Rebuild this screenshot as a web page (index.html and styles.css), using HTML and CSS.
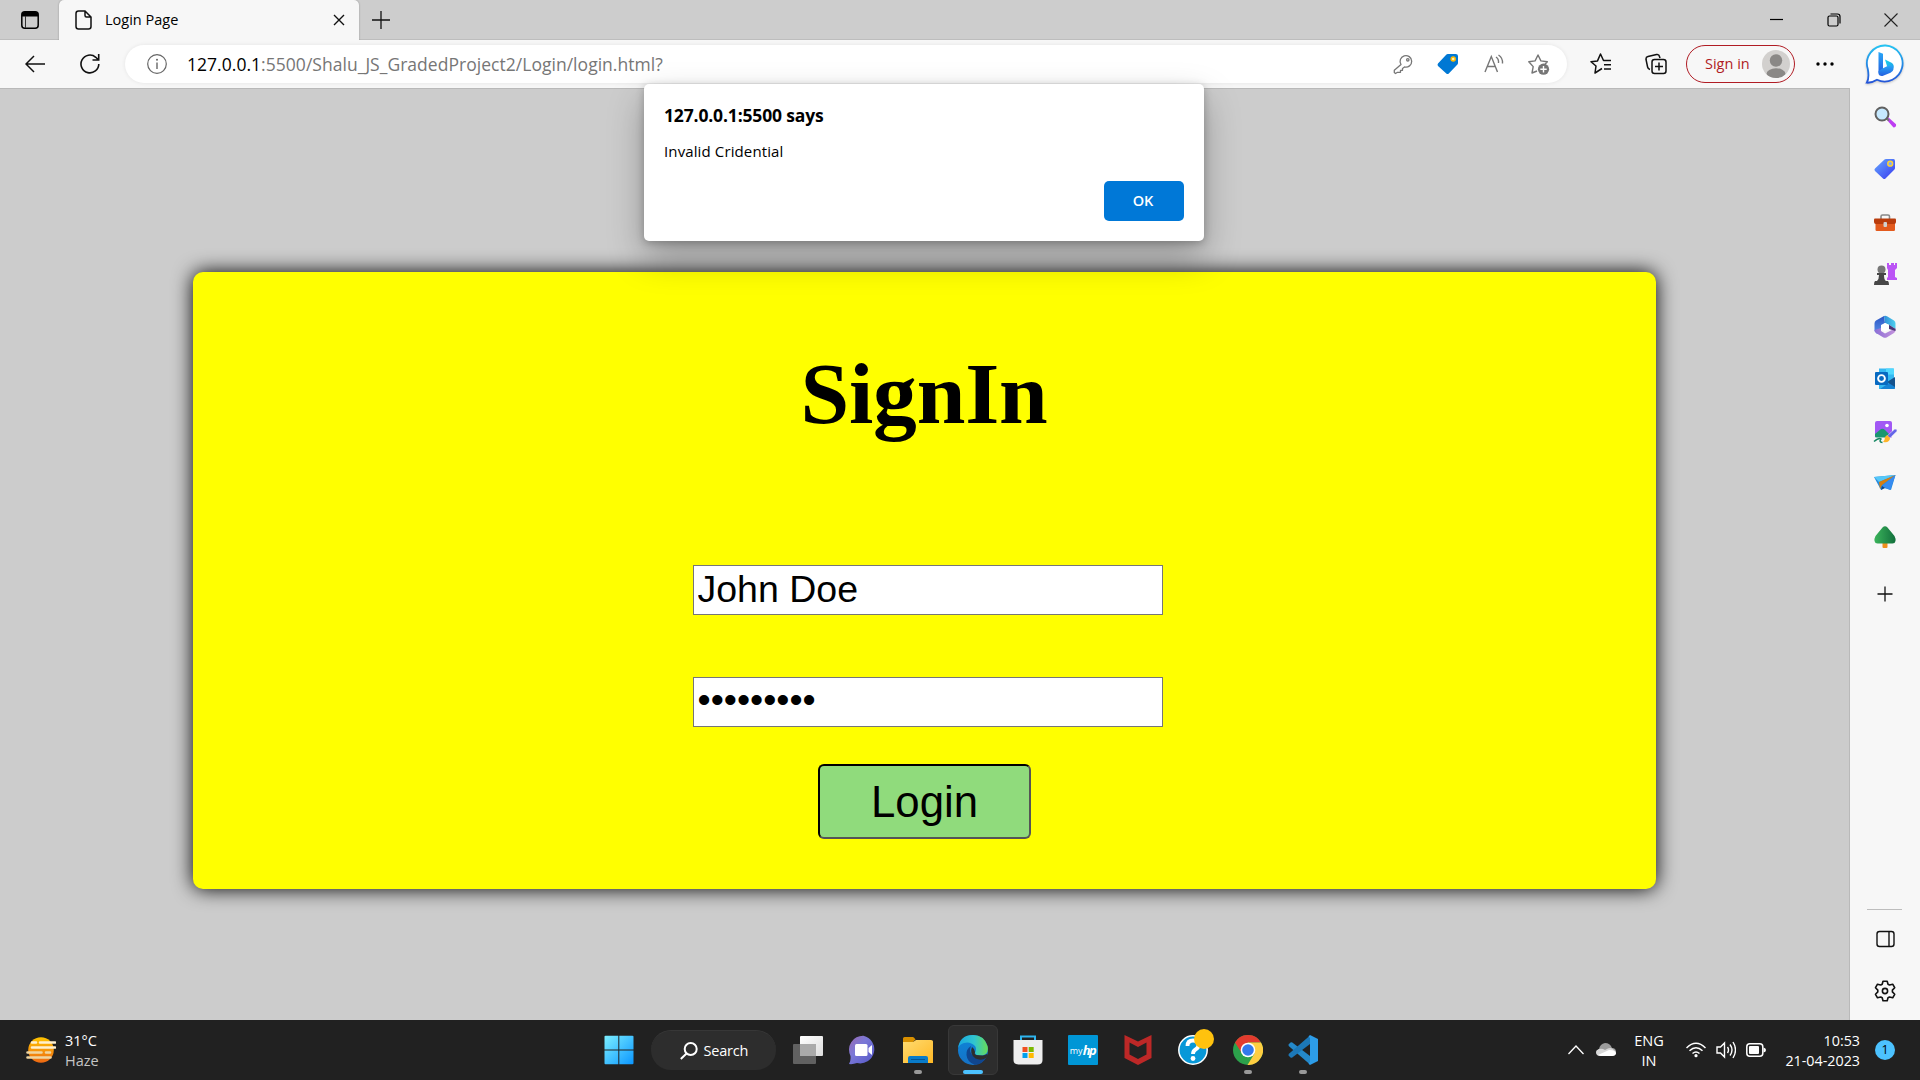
FILE: index.html
```html
<!DOCTYPE html>
<html lang="en">
<head>
<meta charset="utf-8">
<title>Login Page</title>
<link rel="stylesheet" href="styles.css">
</head>
<body>
<div class="browser">
  <header class="tabstrip">
    <div class="tab-menu"><svg width="18" height="18" viewBox="0 0 18 18"><rect x=".8" y=".8" width="16.400" height="16.400" rx="3" fill="none" stroke="#000" stroke-width="1.500"/><path d="M1 5.500V3.500Q1 1 3.500 1h11Q17 1 17 3.500v2z"/><path d="M4.500 5v12" stroke="#333"/></svg></div>
    <div class="tab">
      <svg class="tab-page" width="17" height="20" viewBox="0 0 17 20" fill="none" stroke="#111" stroke-width="1.500"><path d="M3.500 1H10l6 6v9.500Q16 19 13.500 19h-10Q1 19 1 16.500v-13Q1 1 3.500 1zM10 1v4.500Q10 7 11.500 7H16"/></svg>
      <span class="tab-title">Login Page</span>
      <svg class="tab-close" width="12" height="12" viewBox="0 0 12 12" stroke="#111" stroke-width="1.400"><path d="M1 1l10 10M11 1L1 11"/></svg>
    </div>
    <svg class="tab-new" width="18" height="18" viewBox="0 0 18 18" stroke="#111" stroke-width="1.300"><path d="M9 0v18M0 9h18"/></svg>
    <div class="window-buttons">
      <svg width="14" height="14" viewBox="0 0 14 14" stroke="#000"><path d="M0 6.500h13" stroke-width="1.200"/></svg>
      <svg width="14" height="14" viewBox="0 0 14 14" fill="none" stroke="#000" stroke-width="1.200"><rect x="1" y="3" width="10" height="10" rx="1.500"/><path d="M3.500 1H10.500Q13 1 13 3.500V10.500"/></svg>
      <svg width="14" height="14" viewBox="0 0 14 14" stroke="#222" stroke-width="1.100"><path d="M.5.5l13 13M13.500.5l-13 13"/></svg>
    </div>
  </header>

  <nav class="toolbar">
    <svg class="back" width="20" height="18" viewBox="0 0 20 18" fill="none" stroke="#111" stroke-width="1.500"><path d="M9 1L1 9l8 8M1 9h19"/></svg>
    <svg class="reload" width="20" height="20" viewBox="0 0 20 20" fill="none" stroke="#111" stroke-width="1.600"><path d="M18.800 10A8.900 8.900 0 1 1 15.800 3.300L18.500 6M18.700 0v6H12.500"/></svg>
    <div class="address">
      <svg class="info" width="20" height="20" viewBox="0 0 20 20" fill="none" stroke="#666"><circle cx="10" cy="10" r="9.300" stroke-width="1.200"/><path d="M10 8.500V15" stroke-width="1.400"/><circle cx="10" cy="5.800" r="1" fill="#666" stroke="none"/></svg>
      <span class="url"><b>127.0.0.1</b>:5500/Shalu_JS_GradedProject2/Login/login.html?</span>
      <div class="address-tools">
        <svg width="22" height="22" viewBox="0 0 22 22" fill="none" stroke="#767676" stroke-width="1.300" stroke-linejoin="round"><path d="M9 11.500A5.800 5.800 0 1 1 12.500 14L10.500 15.500v1.800H8.500v2H5.500L3.500 20.500 2.300 19.500v-2.200z"/><circle cx="15.800" cy="6.800" r="1.200"/></svg>
        <svg width="22" height="22" viewBox="0 0 22 22"><path d="M10.800 1h8Q21 1 21 3v7q0 1-.8 1.800l-8.400 8.700q-1.300 1.200-2.500 0L1 13q-1-1.200 0-2.400L9.200 1.700q.7-.7 1.600-.7z" fill="#0078d4"/><circle cx="16.200" cy="6" r="2" fill="#fff3b0" stroke="#ffb900" stroke-width="1.500"/></svg>
        <svg width="22" height="22" viewBox="0 0 22 22" fill="none" stroke="#767676" stroke-width="1.400"><path d="M2 19L8.300 3.500 14.500 19M4.300 13.500h8M13 4q3 2 2.500 6M15.500 2q4.500 3 4 8.500"/></svg>
        <svg width="22" height="22" viewBox="0 0 22 22"><path d="M9 18l-5 2 1.200-6.400L.8 8.800l6.300-.9L10 2l2.900 5.900 6.400.9-2.500 2.600" fill="none" stroke="#767676" stroke-width="1.400" stroke-linejoin="round"/><circle cx="15.500" cy="16.200" r="5.600" fill="#767676"/><path d="M15.500 13v6.400M12.300 16.200h6.400" stroke="#fff" stroke-width="1.400"/></svg>
      </div>
    </div>
    <svg class="favorites" width="22" height="22" viewBox="0 0 22 22" fill="none" stroke="#111" stroke-width="1.500" stroke-linejoin="round"><path d="M12 15.500L5 20l1-7L1 8.800l6.500-.9L10.500 1l3 6.500H21M14 11.800h7M14 16h7"/></svg>
    <svg class="collections" width="22" height="22" viewBox="0 0 22 22" fill="none" stroke="#111" stroke-width="1.500"><path d="M5 16.500Q3 16 2.600 14L1 6.500Q.7 4 3 3.500l8.500-2Q14 1 14.500 3.500L15 5"/><rect x="7" y="6.500" width="14" height="14" rx="2.500"/><path d="M14 9.500v8M10 13.500h8"/></svg>
    <div class="sign-in"><span>Sign in</span>
      <svg width="28" height="28" viewBox="0 0 28 28"><defs><clipPath id="avatar"><circle cx="14" cy="14" r="14"/></clipPath></defs><circle cx="14" cy="14" r="14" fill="#d2d0ce"/><g fill="#8a8886" clip-path="url(#avatar)"><circle cx="14" cy="10.500" r="6.200"/><ellipse cx="14" cy="24" rx="9.500" ry="5.800"/></g></svg>
    </div>
    <svg class="more" width="18" height="4" viewBox="0 0 18 4"><circle cx="2" cy="2" r="1.700"/><circle cx="9" cy="2" r="1.700"/><circle cx="16" cy="2" r="1.700"/></svg>
    <svg class="bing" width="40" height="40" viewBox="0 0 40 40"><defs><linearGradient id="bg" x2="0" y2="1"><stop stop-color="#25c3f2"/><stop offset="1" stop-color="#2454d8"/></linearGradient><linearGradient id="bb" x2="0" y2="1"><stop stop-color="#28a8f8"/><stop offset="1" stop-color="#2560df"/></linearGradient><linearGradient id="bc" y2="1"><stop stop-color="#16d6e8"/><stop offset="1" stop-color="#249bed"/></linearGradient></defs><path d="M20.500 1.500A18 18 0 1 1 12 35.800Q7 39 1.800 38.700 4.500 34 2.800 25A18 18 0 0 1 20.500 1.500z" fill="#fff" stroke="url(#bg)" stroke-width="1.800"/><path d="M13.500 8l4.500 1.800v15L13.500 29z" fill="url(#bb)"/><path d="M20 15.500l7 3.500q3 2.800 1 6l-6-3z" fill="url(#bc)"/><path d="M13.500 27l4.500-2.700 6-3q4.500 0 4.500 4-.5 2.500-3 3.500L17.500 32q-3 .5-4-2z" fill="url(#bb)"/></svg>
  </nav>

  <div class="workspace">
    <main class="page">
      <form class="login-card" onsubmit="return false">
        <h1 class="login-title">SignIn</h1>
        <input class="field" type="text" value="John Doe" aria-label="Username">
        <input class="field" type="password" value="password1" aria-label="Password">
        <button class="login-button" type="button">Login</button>
      </form>
    </main>

    <aside class="sidebar">
      <svg viewBox="0 0 24 24"><path d="M13.500 14.500l2-2 7.500 6.800q.6 3-2.500 3.200z" fill="#bd3df2"/><path d="M13 13l3 2.500" stroke="#777" stroke-width="2"/><circle cx="9" cy="9" r="6.500" fill="#c6e9ff" stroke="#606060" stroke-width="2"/></svg>
      <svg viewBox="0 0 24 24"><defs><linearGradient id="tg" x2="1" y2="1"><stop stop-color="#66a9ff"/><stop offset="1" stop-color="#3838ef"/></linearGradient></defs><path d="M13 2h7.500Q22 2 22 4v7q0 1-.8 1.800l-8.700 8.700q-1.200 1.200-2.500 0L2 14q-1.200-1.300 0-2.600L11.500 2.600Q12 2 13 2z" fill="url(#tg)"/><circle cx="17.200" cy="6.700" r="2.400" fill="#79aaff" stroke="#ffd130" stroke-width="1.500"/></svg>
      <svg viewBox="0 0 24 24"><path d="M8 9V6.500Q8 5 9.500 5h5.500Q16.500 5 16.500 6.500V9" fill="none" stroke="#888" stroke-width="1.600"/><rect x="2.500" y="12" width="19.500" height="9" rx="1.200" fill="#e35a1d"/><path d="M2 8.500h20q1 0 1 1V12q0 2-2 2H3q-2 0-2-2V9.500q0-1 1-1z" fill="#b93c0c"/><rect x="10.500" y="12" width="3.500" height="5" rx="1" fill="#d1d1d1"/></svg>
      <svg viewBox="0 0 24 24"><path d="M14 1h2v2h2V1h3v2h1V1h2v5l-2 2v7l2 1v2H14v-2l1-1V8l-1-2z" fill="#bb54f5"/><circle cx="8.500" cy="7.500" r="4" fill="#777"/><path d="M4 11h9v2h-2q0 5 2 6h2q1 1 1 4H1q0-3 1-4h2q2-2 2-6H4z" fill="#474747"/></svg>
      <svg viewBox="0 0 24 24"><defs><linearGradient id="ma" x2="0" y2="1"><stop stop-color="#2a55c4"/><stop offset="1" stop-color="#5a8fe8"/></linearGradient><linearGradient id="mb"><stop stop-color="#2f8fd8"/><stop offset="1" stop-color="#4fd0ee"/></linearGradient><linearGradient id="mc"><stop stop-color="#8c6fd6"/><stop offset="1" stop-color="#c493dc"/></linearGradient></defs><path d="M11 1l1 7-4 3v5l-4 3-2.500-3V8.500Q1.500 6.500 3 5.500z" fill="url(#ma)"/><path d="M11 1q1.500-.6 3 .3l7 4.200q1.500 1 1.500 3V14l-6-4-4.500-2z" fill="url(#mb)"/><path d="M1.500 15l6.500-2v3l4 2.500 5-2.500 5.500-3v2q0 2-1.500 3l-7 4.200q-2 1.200-4 0L3 18q-1.500-1-1.500-3z" fill="url(#mc)"/><path d="M16 9.800l6.500 4.200v2L16 14z" fill="#4a3476"/><path d="M12 8l4 2v4.500l-4 2-4-2V10z" fill="#fff"/></svg>
      <svg viewBox="0 0 24 24"><path d="M6 1.500h14q1 0 1 1V13l1 1v7q0 1-1 1H6z" fill="#35b8f1"/><path d="M13 1.500h8v6h-8zM6 7h7v7H6z" fill="#50d9ff"/><path d="M22 12v9q0 1-1 1H7z" fill="#1683d5"/><path d="M14 15l8-5v10z" fill="#15528d"/><rect x="2" y="5" width="13" height="13" rx="1" fill="#086ac1"/><circle cx="8.500" cy="11.500" r="3.400" fill="none" stroke="#fff" stroke-width="1.900"/></svg>
      <svg viewBox="0 0 24 24"><rect x="2" y="1" width="17" height="17" rx="2" fill="#a158f4"/><path d="M2 14l6-5q2-1 4 1l5 5-1 3H4q-2 0-2-2z" fill="#1a9770"/><circle cx="14" cy="5.500" r="1.800" fill="#fff"/><path d="M0 17.500h12l-1 6H0z" fill="#f7f7f7"/><path d="M1 21.500q5-4 7-2.500-2.500 3 1.500 3.500" fill="none" stroke="#168863" stroke-width="1.500"/><path d="M14 16l7.500-6.800q3-.5 2.500 2L17 18z" fill="#6565e9" stroke="#f7f7f7" stroke-width=".5"/><path d="M14 15l3 3q0 5-7 4 2-2 2-5z" fill="#ffb529"/></svg>
      <svg viewBox="0 0 24 24"><path d="M1 5l21.500-2L18 18l-7-2-3 2z" fill="#268bdf"/><path d="M1 5l21.500-2L6 10z" fill="#55c8f8"/><path d="M6 10l16.500-7L9 13l-2 4z" fill="#d57e12"/><path d="M9 14L22.500 3 17 18z" fill="#368bf1"/><path d="M9 14l3 2-4 2z" fill="#0d448c"/></svg>
      <svg viewBox="0 0 24 24"><rect x="9.500" y="15" width="5" height="8" rx="1" fill="#f0901d"/><defs><linearGradient id="tree" x2="1"><stop stop-color="#3bb45b"/><stop offset="1" stop-color="#126f3c"/></linearGradient></defs><path d="M9.500 2.500q2.500-2.500 5 0l7 8.500q1.500 3 1 5-.5 2.500-3 2.500h-15Q2 18.500 1.500 16q-.5-2 1-5z" fill="url(#tree)"/></svg>
      <svg class="sidebar-plus" viewBox="0 0 24 24" stroke="#111" stroke-width="1.300"><path d="M12 4.500v15M4.500 12h15"/></svg>
      <div class="sidebar-bottom">
        <svg viewBox="0 0 24 24" fill="none" stroke="#111" stroke-width="1.400"><rect x="4" y="4.500" width="17" height="15" rx="2.500"/><path d="M16 4.500v15"/></svg>
        <svg viewBox="0 0 24 24" fill="none" stroke="#111" stroke-width="1.600" stroke-linejoin="round"><path d="M10 2.200h4.200l.8 3 1.500.8 3.200-.8 2 3.500-2.300 2.400v1.800l2.300 2.400-2 3.500-3.200-.8-1.500.8-.8 3H10l-.8-3-1.500-.8-3.200.8-2-3.500 2.300-2.400v-1.800L2.500 8.700l2-3.500 3.200.8 1.500-.8z"/><circle cx="12" cy="12" r="2.600"/></svg>
      </div>
    </aside>
  </div>

  <div class="alert" role="alertdialog">
    <h2 class="alert-title">127.0.0.1:5500 says</h2>
    <p class="alert-text">Invalid Cridential</p>
    <button class="alert-ok" type="button">OK</button>
  </div>
</div>

<footer class="taskbar">
  <div class="weather">
    <svg width="30" height="28" viewBox="0 0 30 28"><defs><linearGradient id="sun" x2="0" y2="1"><stop stop-color="#ffc400"/><stop offset="1" stop-color="#ed6813"/></linearGradient></defs><circle cx="15" cy="14" r="12.800" fill="url(#sun)"/><path d="M6 6.500h4M14 6.500h15M6 11.500h23" stroke="#fff0cd" stroke-width="2.600" stroke-linecap="round"/><path d="M1.500 16.500h14M20 16.500h4M1.500 21.500h23" stroke="#efd5a0" stroke-width="2.600" stroke-linecap="round"/></svg>
    <div class="weather-text"><span>31°C</span><span class="muted">Haze</span></div>
  </div>
  <div class="apps">
    <div class="app"><svg viewBox="0 0 30 30"><defs><linearGradient id="win" x2="1" y2="1"><stop stop-color="#7cefff"/><stop offset="1" stop-color="#0b96ff"/></linearGradient></defs><path d="M.5 1.500q0-.8 1-.8H14.300v13.800H.5zM15.300.7h13q1.200 0 1.200.8v13H15.300zM.5 15.500h13.800v13.800H1.500q-1 0-1-1zM15.300 15.500h14.200v12.800q0 1-1.200 1h-13z" fill="url(#win)"/></svg></div>
    <div class="search"><svg width="18" height="18" viewBox="0 0 18 18" fill="none" stroke="#fff" stroke-width="2"><circle cx="10.700" cy="7" r="6"/><path d="M6.500 11.500L.8 17"/></svg><span>Search</span></div>
    <div class="app"><svg viewBox="0 0 30 30"><defs><linearGradient id="tv" x2="1" y2="1"><stop stop-color="#fff"/><stop offset="1" stop-color="#ddd"/></linearGradient></defs><rect x="7" y="1" width="23" height="20" rx="1" fill="url(#tv)"/><rect y="9" width="23" height="20" rx="1" fill="#6c6c6c" opacity=".85"/><path d="M7 9h16v12H7z" fill="#aaa"/></svg></div>
    <div class="app"><svg viewBox="0 0 30 30"><defs><linearGradient id="chat" x2="1" y2="1"><stop stop-color="#9b69b0"/><stop offset=".4" stop-color="#7b78d7"/><stop offset="1" stop-color="#5357c8"/></linearGradient></defs><path d="M15.500.7A14 14 0 1 1 9 28q-4 1.500-8 1Q3 26 2.500 21A14 14 0 0 1 15.500.7z" fill="url(#chat)"/><rect x="7" y="9" width="12.500" height="12" rx="1.500" fill="#fff"/><path d="M20.500 13l3.500-3v10l-3.500-3z" fill="#fff"/></svg></div>
    <div class="app running"><svg viewBox="0 0 30 30"><defs><linearGradient id="folder" x2="1" y2="1"><stop stop-color="#ffdb70"/><stop offset="1" stop-color="#ffb825"/></linearGradient></defs><path d="M0 3.500Q0 2 1.500 2H10q1 0 2.500 2.500L10 7H0z" fill="#d99000"/><path d="M0 7h10l3-2h15q2 0 2 1.500V28H0z" fill="url(#folder)"/><path d="M5 28v-5q0-2 2-2h16q2 0 2 2v5z" fill="#097bc9"/><path d="M8 24.500h14" stroke="#055493"/></svg></div>
    <div class="app running active"><svg viewBox="0 0 30 30"><defs><linearGradient id="edge" x2="1"><stop stop-color="#19a8e1"/><stop offset=".55" stop-color="#31c5cf"/><stop offset="1" stop-color="#68dd54"/></linearGradient><linearGradient id="edgeb" x2="0" y2="1"><stop stop-color="#0c86da"/><stop offset="1" stop-color="#1672c5"/></linearGradient></defs><circle cx="15" cy="15" r="15" fill="url(#edgeb)"/><path d="M0 13Q2 0 15 0q11 0 14.500 11 2 9-7 9.500-4.500 0-5.500-2.500 2-4 0-7Q12 6 6 8 2 9 0 13z" fill="url(#edge)"/><path d="M13 11q-5 3-4.500 9Q9 27 17 30q8-1 11.500-8-7 4-12 0Q10 17 13 11z" fill="#10468f"/><path d="M14 12q3 2 3 5-1 2 1 3l6.500.5q2.500-.2 4.500-1.500l.5 1.500L28 23q-5 3-10.500.5Q11 19 14 12z" fill="#2d2d2d"/></svg></div>
    <div class="app"><svg viewBox="0 0 30 30"><path d="M8 6V1.500h14V6" fill="none" stroke="#2eb5ef" stroke-width="2"/><path d="M.5 5h29v20q0 4.500-5 4.500h-19q-5 0-5-4.500z" fill="#eee"/><path fill="#f05022" d="M9.500 12h5v5h-5z"/><path fill="#7bb900" d="M15.700 12h5v5h-5z"/><path fill="#00a0ed" d="M9.500 18h5v5h-5z"/><path fill="#ffb900" d="M15.700 18h5v5h-5z"/></svg></div>
    <div class="app"><div class="myhp"><span>my</span><b>hp</b></div></div>
    <div class="app"><svg viewBox="0 0 30 30"><path d="M1.500 0L15 6.500 28.500 0v23L15 30 1.500 23z" fill="#bd2827"/><path d="M6.500 7.500L15 12l8.500-4.500v12L15 24l-8.500-4.500z" fill="#222"/></svg></div>
    <div class="app"><svg viewBox="0 0 30 30"><circle cx="15" cy="15" r="14.200" fill="#0798d8" stroke="#fff" stroke-width="1.500"/><path d="M9.500 11q0-5.500 5.500-5.500t5.500 4.500q0 3-3 4.500-2.500 1.500-2.500 4.500" fill="none" stroke="#fff" stroke-width="3.800"/><circle cx="15" cy="23.500" r="2.400" fill="#fff"/></svg><span class="app-badge"></span></div>
    <div class="app running"><svg viewBox="0 0 30 30"><circle cx="15" cy="15" r="15" fill="#2ca14b"/><path d="M2 7.500A15 15 0 0 1 28 7.500H15L9 18.500z" fill="#e33b2e"/><path d="M28 7.500A15 15 0 0 1 14.500 30l7-11.500L15 7.500z" fill="#ffce41"/><circle cx="15" cy="15" r="7.300" fill="#fff"/><circle cx="15" cy="15" r="5.800" fill="#3379ed"/></svg></div>
    <div class="app running"><svg viewBox="0 0 30 30"><path d="M.5 9.500l2-2q.8-.6 1.800 0L22 21v8.500L.7 11z" fill="#2489ca"/><path d="M.5 20.500l2 2q.8.6 1.800 0L22 9V.5L.7 19z" fill="#1c78b8"/><path d="M22 0l8 4v22l-8 4-1.500-1.500L22 27V3l-1.500-1.500z" fill="#2d9de9"/></svg></div>
  </div>
  <div class="tray">
    <svg class="chevron" width="16" height="10" viewBox="0 0 16 10" fill="none" stroke="#fff" stroke-width="1.300"><path d="M.5 9L8 1l7.500 8"/></svg>
    <svg class="cloud" width="20" height="14" viewBox="0 0 20 14"><path d="M3 6Q4 1 9 0q5 0 7 5 4 0 4 4v2H1Q-1 8 3 6z" fill="#9b9b9b"/><path d="M3 6q3-1 6 1 6-4 9 0 2 1 2 3-1 3-4 3H4q-4 0-4-4 0-2 3-3z" fill="#d8d8d8"/><path d="M2 12L13 7q7 0 7 4-1 2-4 2H5z" fill="#fff"/></svg>
    <div class="language"><span>ENG</span><span>IN</span></div>
    <svg class="wifi" width="20" height="16" viewBox="0 0 20 16" fill="none" stroke="#fff" stroke-width="1.500"><path d="M.5 6Q10-3.500 19.500 6M3.500 8.800q6.500-6 13 0M6.500 11.500q3.500-3 7 0"/><circle cx="10" cy="13.700" r="1.600" fill="#fff" stroke="none"/></svg>
    <svg class="sound" width="20" height="18" viewBox="0 0 20 18" fill="none" stroke="#fff" stroke-width="1.400"><path d="M1 6h3.500L8.500 2v14l-4-4H1zM11.500 6q2 3 0 6M14 3.500q4 5.500 0 11M17 1q5 8 0 16"/></svg>
    <svg class="battery" width="20" height="14" viewBox="0 0 20 14"><rect x=".8" y=".8" width="16" height="12.400" rx="3" fill="none" stroke="#fff" stroke-width="1.500"/><rect x="3" y="3" width="10" height="8" rx="1" fill="#fff"/><path d="M17.500 4.500q2.500.5 2.500 2.500t-2.500 2.500z" fill="#fff"/></svg>
    <div class="clock"><span>10:53</span><span>21-04-2023</span></div>
    <span class="notification">1</span>
  </div>
</footer>
</body>
</html>
```
FILE: styles.css
```css
* { box-sizing: border-box; }

body {
  margin: 0;
  width: 1920px;
  height: 1080px;
  overflow: hidden;
  display: flex;
  flex-direction: column;
  background: #ccc;
  color: #000;
  font-family: "Open Sans", "Noto Sans", sans-serif;
  font-size: 14px;
}

svg { display: block; flex: none; }
span, b { white-space: nowrap; }

.browser {
  position: relative;
  height: 1020px;
  display: flex;
  flex-direction: column;
}

/* Tab strip */
.tabstrip {
  height: 40px;
  display: flex;
  align-items: center;
  background: #cdcdcd;
  box-shadow: inset 0 -1px #bdbdbd;
}
.tab-menu {
  width: 59px;
  padding-left: 21px;
}
.tab {
  width: 300px;
  height: 40px;
  padding: 0 14px 0 16px;
  display: flex;
  align-items: center;
  background: #f7f7f7;
  border-radius: 5px 5px 0 0;
  box-shadow: 0 0 2px rgba(0, 0, 0, .3);
  clip-path: inset(0 -3px);
}
.tab-title { margin-left: 13px; padding-bottom: 2px; font-size: 14.500px; }
.tab-close { margin-left: auto; }
.tab-new { margin-left: 13px; }
.window-buttons {
  margin-left: auto;
  padding-right: 22px;
  display: flex;
  gap: 43px;
}

/* Toolbar */
.toolbar {
  height: 48px;
  display: flex;
  align-items: center;
  padding: 0 15px 0 25px;
  background: #f7f7f7;
}
.reload { margin-left: 35px; }
.address {
  margin-left: 25px;
  width: 1442px;
  height: 38px;
  padding: 0 17px 0 22px;
  display: flex;
  align-items: center;
  background: #fff;
  border-radius: 19px;
  box-shadow: 0 0 4px rgba(0, 0, 0, .08);
}
.url {
  margin-left: 20px;
  padding-bottom: 1px;
  color: #767676;
  font-size: 17.500px;
  letter-spacing: .03px;
}
.url b { color: #000; font-weight: 400; }
.address-tools {
  margin-left: auto;
  display: flex;
  gap: 23.400px;
}
.favorites { margin-left: 23px; }
.collections { margin-left: 33px; }
.sign-in {
  margin-left: 19px;
  width: 109px;
  height: 38px;
  padding: 0 4px 0 18px;
  display: flex;
  align-items: center;
  justify-content: space-between;
  border: 1.500px solid #b01c24;
  border-radius: 19px;
  color: #b01c24;
  font-size: 14.500px;
}
.sign-in span { padding-bottom: 1px; }
.more { margin-left: 21px; }
.bing { margin-left: auto; filter: drop-shadow(0 1px 1px rgba(0, 0, 0, .2)); }

/* Page */
.workspace { height: 932px; display: flex; }
.page {
  width: 1850px;
  padding: 183px 193px 0;
  border-top: 1px solid #b9b9b9;
  border-right: 1px solid #b9b9b9;
  background: #ccc;
}
.login-card {
  width: 1463px;
  height: 617px;
  padding-left: 6px;
  display: flex;
  flex-direction: column;
  align-items: center;
  background: #ff0;
  border-radius: 10px;
  box-shadow: 0 0 20px #000;
}
.login-title {
  margin: 71px 7px 121px 0;
  font: bold 87.500px/101px "Liberation Serif", serif;
  letter-spacing: -.2px;
}
.field {
  width: 470px;
  height: 50px;
  margin: 0 0 62px;
  padding: 0 4px 2px;
  border: 1px solid #767676;
  border-radius: 0;
  background: #fff;
  color: #000;
  font: 37.500px "Liberation Sans", sans-serif;
}
.field[type="password"] { padding-bottom: 5px; }
.field + .login-button { margin-top: -25px; }
.login-button {
  width: 213px;
  height: 75px;
  margin-right: 6px;
  padding: 0;
  border: 2px solid;
  border-color: #000 #555 #555 #000;
  border-radius: 6px;
  background: #90db7c;
  color: #000;
  font: 43.750px "Liberation Sans", sans-serif;
}

/* Edge sidebar */
.sidebar {
  width: 70px;
  padding: 16.500px 1px 17px 0;
  display: flex;
  flex-direction: column;
  align-items: center;
  gap: 28.500px;
  background: #f7f7f7;
}
.sidebar svg { width: 24px; height: 24px; }
.sidebar .sidebar-plus { margin-top: 4.500px; }
.sidebar-bottom {
  width: 35px;
  margin-top: auto;
  padding-top: 17px;
  display: flex;
  flex-direction: column;
  align-items: center;
  gap: 28px;
  border-top: 1px solid #bdbdbd;
}

/* Alert over the page */
.alert {
  position: absolute;
  left: 644px;
  top: 84px;
  width: 560px;
  height: 157px;
  padding: 17px 20px 20px;
  display: flex;
  flex-direction: column;
  background: #fff;
  border-radius: 5px;
  box-shadow: 0 16px 36px rgba(0, 0, 0, .28), 0 2px 9px rgba(0, 0, 0, .24);
}
.alert-title { margin: 0; font-size: 17.500px; line-height: 28px; font-weight: 700; letter-spacing: -.15px; }
.alert-text { margin: 8px 0 0; font-size: 15px; line-height: 28px; letter-spacing: .12px; }
.alert-ok {
  margin: auto 0 0 auto;
  width: 80px;
  height: 40px;
  padding: 0 2px 2px 0;
  border: 0;
  border-radius: 5px;
  background: #0078d7;
  color: #fff;
  font: 600 14.500px "Open Sans", sans-serif;
}

/* Taskbar */
.taskbar {
  height: 60px;
  display: flex;
  align-items: center;
  background: #212121;
  color: #fff;
}
.weather { width: 591.500px; padding-left: 26px; display: flex; align-items: center; gap: 9px; }
.weather-text, .language, .clock { padding-top: 1px; display: flex; flex-direction: column; line-height: 20px; }
.weather-text { font-size: 14.500px; }
.muted { color: #c5c5c5; }
.apps { display: flex; align-items: center; }
.app {
  position: relative;
  width: 55px;
  height: 50px;
  display: flex;
  align-items: center;
  justify-content: center;
}
.app svg { width: 30px; height: 30px; }
.running::after {
  content: "";
  position: absolute;
  left: 23.500px;
  bottom: 1px;
  width: 8px;
  height: 4px;
  border-radius: 2px;
  background: #999;
}
.active { width: 50px; margin: 0 2.500px; background: #2d2d2d; border: 1px solid #383838; border-radius: 6px; }
.active::after { left: 14px; bottom: 0; width: 20px; background: #4cc2ff; }
.search {
  width: 125px;
  height: 40px;
  margin: 0 4.500px 0 4px;
  padding-left: 29px;
  display: flex;
  align-items: center;
  gap: 6px;
  background: #2d2d2d;
  border-top: 1px solid #373737;
  border-radius: 20px;
}
.search span { font-size: 14.500px; letter-spacing: -.2px; }
.myhp {
  width: 30px;
  height: 30px;
  display: flex;
  align-items: center;
  justify-content: center;
  border-radius: 1px;
  background: #0096d6;
  font-size: 9px;
}
.myhp b { font-size: 13px; font-style: italic; letter-spacing: -1.500px; }
.app-badge { position: absolute; left: 28.500px; top: 4px; width: 20px; height: 20px; border-radius: 50%; background: #ffc20e; }
.tray { margin-left: auto; padding-right: 25px; display: flex; align-items: center; }
.cloud { margin-left: 12px; }
.language { width: 30px; margin-left: 18px; align-items: center; font-size: 14.500px; }
.wifi { margin-left: 22px; }
.sound, .battery { margin-left: 10px; }
.clock { width: 80px; margin-left: 14px; align-items: flex-end; font-size: 14.300px; }
.notification {
  width: 20px;
  height: 20px;
  margin-left: 15px;
  border-radius: 50%;
  background: #4cc2ff;
  color: #000;
  font-size: 12.500px;
  line-height: 20px;
  text-align: center;
}
```
